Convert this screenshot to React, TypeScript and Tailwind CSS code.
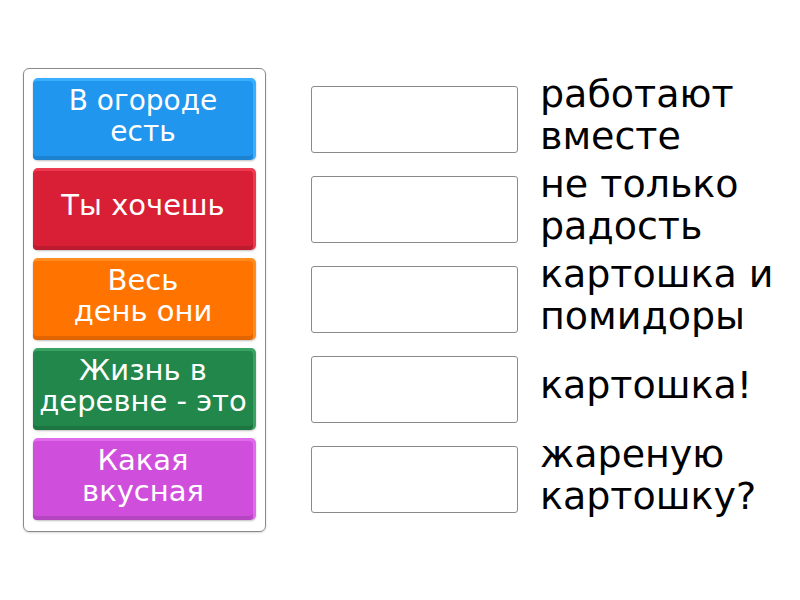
const cards = [
  { lines: ["В огороде", "есть"], bg: "bg-[#2196ee]", rim: "bg-[#3aaeff]", size: "text-[28px]" },
  { lines: ["Ты хочешь"], bg: "bg-[#d81f36]", rim: "bg-[#ec3a50]", size: "text-[29px]" },
  { lines: ["Весь", "день они"], bg: "bg-[#ff7400]", rim: "bg-[#ff8c1e]", size: "text-[29px]" },
  { lines: ["Жизнь в", "деревне - это"], bg: "bg-[#22874a]", rim: "bg-[#3aa263]", size: "text-[29px]" },
  { lines: ["Какая", "вкусная"], bg: "bg-[#cf4fdc]", rim: "bg-[#df6ceb]", size: "text-[29px]" },
];

const answers = [
  ["работают", "вместе"],
  ["не только", "радость"],
  ["картошка и", "помидоры"],
  ["картошка!"],
  ["жареную", "картошку?"],
];

export default function App() {
  return (
    <div
      className="w-[800px] h-[600px] bg-white flex pt-[68px] pl-[23px]"
      style={{ fontFamily: "'DejaVu Sans', sans-serif" }}
    >
      <div className="w-[243px] h-[464px] border border-[#8a8a8a] rounded-md p-[9px] flex flex-col gap-2 shadow-[0_1px_2px_rgba(0,0,0,0.15)]">
        {cards.map((c, i) => (
          <div
            key={i}
            className={`h-[82px] rounded-[5px] ${c.rim} pt-[3px] pr-[3px] shadow-[0_1px_2px_rgba(0,0,0,0.25)]`}
          >
            <div
              className={`h-full rounded-[4px] ${c.bg} shadow-[inset_0_-4px_0_rgba(0,0,0,0.12)] flex flex-col items-center justify-center text-white ${c.size} leading-[31px] pb-[10px]`}
            >
              {c.lines.map((l) => (
                <span key={l} className="whitespace-nowrap">{l}</span>
              ))}
            </div>
          </div>
        ))}
      </div>
      <div className="flex flex-col gap-2 pt-[10px] ml-[45px]">
        {answers.map((a, i) => (
          <div key={i} className="h-[82px] flex items-center">
            <div className="w-[207px] h-[67px] border border-[#8a8a8a] rounded-[3px] bg-white shrink-0" />
            <div className="ml-[22px] text-[38px] leading-[42px] text-black pb-[8px]">
              {a.map((l) => (
                <div key={l} className="whitespace-nowrap">{l}</div>
              ))}
            </div>
          </div>
        ))}
      </div>
    </div>
  );
}
